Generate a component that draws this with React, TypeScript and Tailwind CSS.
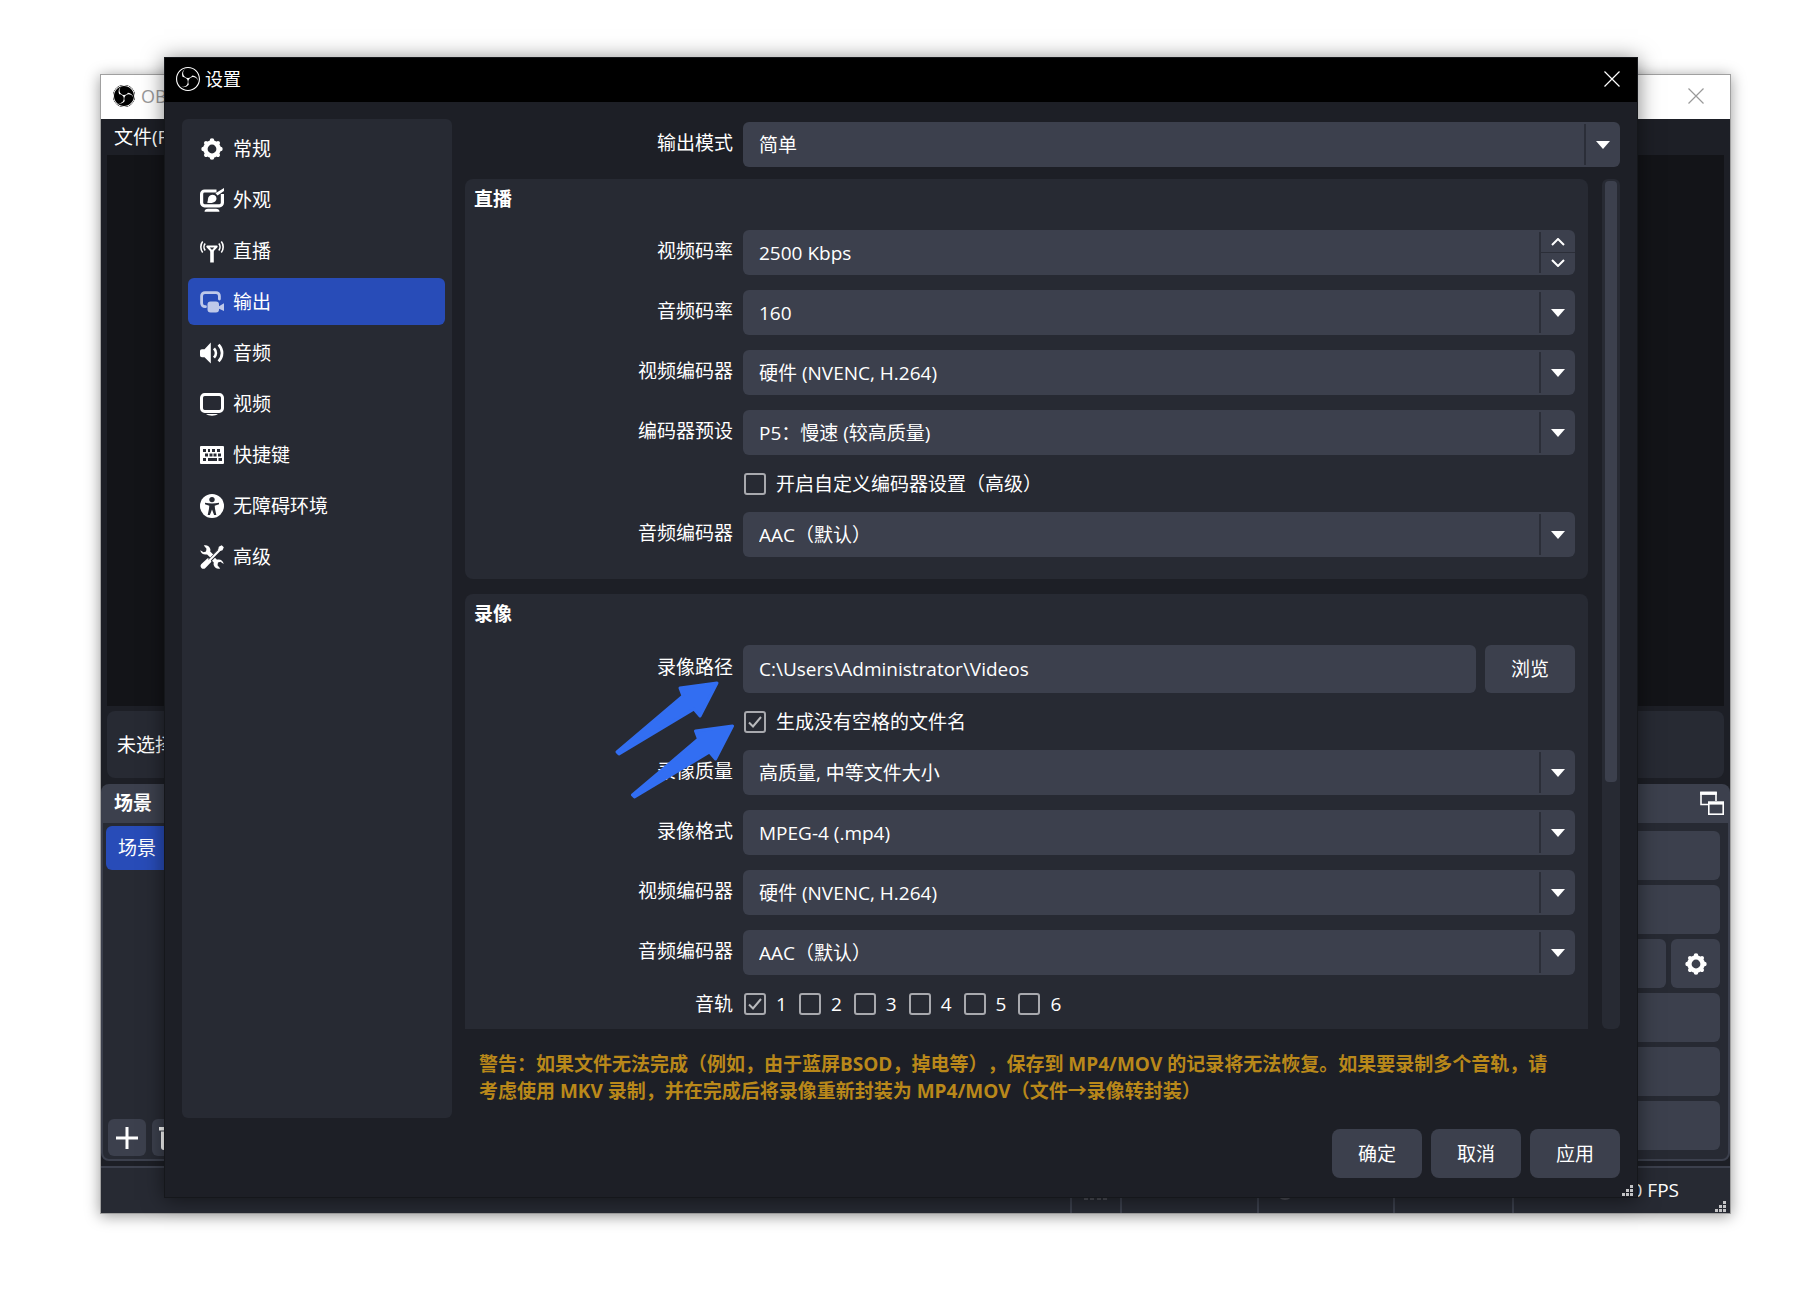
import { useId, type ReactNode } from "react";
import { SiObsstudio } from "react-icons/si";

function GearIcon({ className = "size-6" }: { className?: string }) {
  return (
    <svg viewBox="0 0 24 24" className={className} fill="none" stroke="currentColor">
      <circle cx="12" cy="12" r="6.6" strokeWidth="4.4" />
      <g strokeWidth="4.6" strokeLinecap="round">
        <path d="M12 3.6v1M12 19.4v1M3.6 12h1M19.4 12h1" />
        <path d="M6 6l.7.7M17.3 17.3l.7.7M6 18l.7-.7M17.3 6.7L18 6" strokeWidth="4" />
      </g>
    </svg>
  );
}

function AppearanceIcon() {
  return (
    <svg viewBox="0 0 24 24" className="size-6" fill="none" stroke="currentColor">
      <path
        d="M16.500 3H4.600a3 3 0 0 0-3 3v8.800a3 3 0 0 0 3 3h14.800a3 3 0 0 0 3-3V6"
        strokeWidth="3.200"
      />
      <path d="M4.500 23.800c0-2 1.500-3 3.500-3h8c2 0 3.500 1 3.500 3z" fill="currentColor" stroke="none" />
      <path d="M24 0l-8.500 5.200 2 2.200L24 3z" fill="currentColor" stroke="none" />
      <path
        d="M7 14.600c1.200-1 .6-3 1.300-5 1-2.700 4.200-3.700 6.400-2.300 2.200 1.500 2.400 4.300.7 6-1.900 1.800-5.200 2.300-8.400 1.300z"
        fill="currentColor"
        stroke="none"
      />
    </svg>
  );
}

function StreamIcon() {
  return (
    <svg viewBox="0 0 24 24" className="size-6" fill="none" stroke="currentColor">
      <path d="M7.300 7.500h9.400L12 12.500z" strokeWidth="2" strokeLinejoin="round" />
      <path d="M12 11v12.500" strokeWidth="3.600" />
      <path
        d="M5.200 4.600C3.600 6.500 3.600 9.500 5.200 11.400M2.700 2.600C.2 5.600.2 10.600 2.700 13.600M18.800 4.600c1.600 1.900 1.600 4.900 0 6.800M21.300 2.600c2.500 3 2.500 8 0 11"
        strokeWidth="1.600"
      />
    </svg>
  );
}

function OutputIcon() {
  return (
    <svg viewBox="0 0 24 24" className="size-6 opacity-70" fill="none" stroke="currentColor">
      <path
        d="M5.500 16.700H5a3.400 3.400 0 0 1-3.400-3.400V6A3.400 3.400 0 0 1 5 2.600h11A3.400 3.400 0 0 1 19.400 6v3"
        strokeWidth="2.800"
        strokeLinecap="round"
      />
      <rect x="7.500" y="11.500" width="11.500" height="11" rx="3" fill="currentColor" stroke="none" />
      <path d="M18.500 16.500l5.500-3.200v7.600l-5.500-2.400z" fill="currentColor" stroke="none" />
    </svg>
  );
}

function AudioIcon() {
  return (
    <svg viewBox="0 0 24 24" className="size-6" fill="none" stroke="currentColor">
      <path
        d="M2 8.200h2.500L10.800 1.500v21L4.500 16.200H2c-1.300 0-2-.8-2-2v-4c0-1.200.7-2 2-2z"
        fill="currentColor"
        stroke="none"
      />
      <path d="M14 7.300c2.500 2.800 2.500 6.600 0 9.400M18.600 3.600c4.600 5 4.600 11.800 0 16.800" strokeWidth="2.700" />
    </svg>
  );
}

function VideoIcon() {
  return (
    <svg viewBox="0 0 24 24" className="size-6" fill="none" stroke="currentColor">
      <rect x="1.500" y="2.500" width="21" height="17" rx="3.200" strokeWidth="3" />
      <path d="M6 22h12c-1.500 1.300-3.500 1.700-6 1.700S7.500 23.300 6 22z" fill="currentColor" stroke="none" />
    </svg>
  );
}

function HotkeyIcon() {
  return (
    <svg viewBox="0 0 24 24" className="size-6">
      <path
        fill="currentColor"
        fillRule="evenodd"
        d="M1 3h22a1 1 0 0 1 1 1v16a1 1 0 0 1-1 1H1a1 1 0 0 1-1-1V4a1 1 0 0 1 1-1zM3 6v3h3V6zm5 0v3h2V6zm4 0v3h3V6zm5 0v3h3V6zM5 10.500v3h3v-3zm4.500 0v3h3v-3zm4 0v3h3v-3zm4.500 0v3h3v-3zM3 15v3h3v-3zm5 0v3h9v-3zm10.500 0v3H22v-3z"
      />
    </svg>
  );
}

function AccessibilityIcon() {
  return (
    <svg viewBox="0 0 24 24" className="size-6">
      <circle cx="12" cy="12" r="12" fill="currentColor" />
      <circle cx="12" cy="5.600" r="2.700" fill="#272a33" />
      <path
        d="M5 8.800c4.600 1 9.400 1 14 0v1.500l-4.300 1.500.3 3 1.300 6.200h-2.200L12 15.500 9.900 21H7.700L9 14.800l.3-3L5 10.300z"
        fill="#272a33"
      />
    </svg>
  );
}

function ToolsIcon() {
  return (
    <svg viewBox="0 0 24 24" className="size-6" fill="currentColor">
      <path d="M3.800.5C6.500-.3 9.600 1 10.300 4c.2.800.1 1.600-.1 2.400l3 3-2.900 3-3.200-3C3.800 10.300.7 8.200.3 5.200L3.600 7.300 6 6.500l.5-2.700z" />
      <path d="M20.200 23.500c-2.700.8-5.800-.5-6.500-3.500-.2-.8-.1-1.600.1-2.400l-1.800-1.800 3-3 2 1.900c3.300-.9 6.300 1.200 6.700 4.200l-3.300-2.200-2.400.9-.5 2.600z" />
      <path d="M21.700.2L23.800 2.300l-1.300 3-2.200.7L10.800 15.500l.6 1.200-6 6.300c-1.300 1.300-3 1-4 0s-1.300-2.600 0-4l6.200-5.800 1.300.6L18.300 4.300l.5-2.600z" />
      <path d="M8.500 14.700L18 5" stroke="#272a33" strokeWidth=".7" fill="none" />
    </svg>
  );
}

function PopoutIcon() {
  return (
    <svg viewBox="0 0 24 24" className="size-6" fill="none" stroke="currentColor">
      <path d="M8 13.500H1V1.500h15V10" strokeWidth="1.600" />
      <path d="M.2 2.300h16.600" strokeWidth="3.200" />
      <rect x="8.800" y="11.500" width="14.400" height="11.700" strokeWidth="1.600" />
      <path d="M8 12h16" strokeWidth="3.200" />
    </svg>
  );
}

function CloseIcon() {
  return (
    <svg viewBox="0 0 16 16" className="size-4" fill="none" stroke="currentColor" strokeWidth="1.200">
      <path d="M.5.5l15 15M15.500.5l-15 15" />
    </svg>
  );
}

function SizeGrip() {
  return (
    <svg viewBox="0 0 12 12" className="absolute bottom-0 right-[3px] size-3" fill="#c4c4c6">
      <path d="M8 0h3v3H8zM4 4h3v3H4zM8 4h3v3H8zM0 8h3v3H0zM4 8h3v3H4zM8 8h3v3H8z" />
    </svg>
  );
}

function Row({ label, htmlFor, children }: { label?: string; htmlFor?: string; children: ReactNode }) {
  return (
    <div className="flex items-center gap-[10px]">
      <label htmlFor={htmlFor} className="w-[268px] shrink-0 pb-1 text-right">
        {label}
      </label>
      <div className="flex min-w-0 flex-1 gap-[9px]">{children}</div>
    </div>
  );
}

function SelectRow({ label, value }: { label: string; value: string }) {
  const id = useId();
  return (
    <Row label={label} htmlFor={id}>
      <div className="relative flex-1">
        <select
          id={id}
          className="block h-[45px] w-full appearance-none rounded-md bg-[#3c404d] pl-4 pr-12 text-white"
        >
          <option>{value}</option>
        </select>
        <div className="pointer-events-none absolute inset-y-[2px] right-0 flex w-9 items-center justify-center border-l-2 border-[#2b2e38]">
          <svg viewBox="0 0 14 8" className="h-2 w-[14px]" fill="white">
            <path d="M0 0h14L7 8z" />
          </svg>
        </div>
      </div>
    </Row>
  );
}

function CheckBox({ label, checked = false }: { label: string; checked?: boolean }) {
  return (
    <label className="flex items-center gap-[10px]">
      <span className="grid size-[22px] place-items-center">
        <input
          type="checkbox"
          defaultChecked={checked}
          className="peer col-start-1 row-start-1 size-[22px] appearance-none rounded-[3px] border-2 border-[#a8a9ae]"
        />
        <svg
          viewBox="0 0 14 12"
          className="pointer-events-none invisible col-start-1 row-start-1 h-3 w-[14px] peer-checked:visible"
          fill="none"
          stroke="#b9babd"
          strokeWidth="2"
        >
          <path d="M1 6.500l4 4L13 1" />
        </svg>
      </span>
      {label}
    </label>
  );
}

function Group({ title, children }: { title: string; children: ReactNode }) {
  return (
    <section className="rounded-lg bg-[#272a33] pb-[22px] pr-[13px]">
      <h2 className="pb-[17px] pl-[9px] pt-[6px] font-bold">{title}</h2>
      {children}
    </section>
  );
}

const navItems = [
  { label: "常规", icon: <GearIcon /> },
  { label: "外观", icon: <AppearanceIcon /> },
  { label: "直播", icon: <StreamIcon /> },
  { label: "输出", icon: <OutputIcon />, active: true },
  { label: "音频", icon: <AudioIcon /> },
  { label: "视频", icon: <VideoIcon /> },
  { label: "快捷键", icon: <HotkeyIcon /> },
  { label: "无障碍环境", icon: <AccessibilityIcon /> },
  { label: "高级", icon: <ToolsIcon /> },
];

function MainWindow() {
  return (
    <div className="absolute bottom-[91px] left-[100px] right-[89px] top-[74px] flex flex-col border border-[#a0a0a0] bg-[#1d1f26] shadow-[0_2px_14px_rgba(0,0,0,0.4)]">
      <div className="flex h-11 items-center bg-white pb-[2px] pl-3 text-lg text-[#999]">
        <SiObsstudio className="size-[22px] rounded-full bg-black text-white ring-1 ring-inset ring-black" />
        <span className="pl-[6px]">OBS</span>
        <button aria-label="关闭主窗口" className="ml-auto pr-[26px]">
          <CloseIcon />
        </button>
      </div>
      <div className="h-9 pl-[13px] pt-1">文件(F)</div>
      <div className="mx-[6px] flex-1 bg-[#131418]" />
      <div className="mx-[6px] mt-[5px] flex h-[67px] items-center rounded-lg bg-[#272a33] pl-[10px]">
        未选择源
      </div>
      <div className="mt-[6px] flex h-[38px] items-center justify-between rounded-t-lg bg-[#3c404d] pl-[13px] pr-[6px] font-bold">
        场景
        <PopoutIcon />
      </div>
      <div className="flex h-[339px] justify-between rounded-b-lg border-2 border-t border-[#3c404d] bg-[#272a33]">
        <div className="flex w-64 flex-col pl-[3px] pt-[3px]">
          <div className="flex h-11 items-center rounded-md bg-[#284cb8] pl-3">场景</div>
          <div className="mb-[3px] ml-[2px] mt-auto flex gap-[6px]">
            <button aria-label="添加" className="grid h-[37px] w-[38px] place-items-center rounded-md bg-[#3c404d]">
              <svg viewBox="0 0 22 22" className="size-[22px]" stroke="white" strokeWidth="3">
                <path d="M11 0v22M0 11h22" />
              </svg>
            </button>
            <button aria-label="删除" className="grid h-[37px] w-[38px] place-items-center rounded-md bg-[#3c404d]">
              <svg viewBox="0 0 24 24" className="size-6" fill="white">
                <path d="M0 1h24v3.500H0zM2 5.500h20V21a3 3 0 0 1-3 3H5a3 3 0 0 1-3-3z" />
              </svg>
            </button>
          </div>
        </div>
        <div className="flex w-64 flex-col gap-[5px] pr-2 pt-2">
          <div className="h-[49px] rounded-md bg-[#3c404d]" />
          <div className="h-[49px] rounded-md bg-[#3c404d]" />
          <div className="flex gap-[5px]">
            <div className="h-[49px] flex-1 rounded-md bg-[#3c404d]" />
            <button aria-label="设置" className="grid size-[49px] place-items-center rounded-md bg-[#3c404d]">
              <GearIcon />
            </button>
          </div>
          <div className="h-[49px] rounded-md bg-[#3c404d]" />
          <div className="h-[49px] rounded-md bg-[#3c404d]" />
          <div className="h-[49px] rounded-md bg-[#3c404d]" />
        </div>
      </div>
      <div className="relative mt-[5px] flex h-[47px] justify-end border-t-2 border-[#3c404d] bg-[#272a33]">
        <div className="w-[50px] border-l-2 border-[#3c404d] pl-3 pt-3">
          <svg viewBox="0 0 24 20" className="h-5 w-6" stroke="#4a4c54" strokeWidth="4">
            <path d="M2 14v6M8 10v10M15 5v15M21 0v20" />
          </svg>
        </div>
        <div className="w-[137px] border-l-2 border-[#3c404d]" />
        <div className="w-[136px] border-l-2 border-[#3c404d] pl-[18px] pt-4">
          <div className="size-4 rounded-full bg-[#4a4c54]" />
        </div>
        <div className="w-[119px] border-l-2 border-[#3c404d]" />
        <div className="w-[218px] border-l-2 border-[#3c404d] pr-[51px] pt-2 text-right">30.00 FPS</div>
        <SizeGrip />
      </div>
    </div>
  );
}

function Arrows() {
  return (
    <svg
      viewBox="0 0 130 124"
      className="pointer-events-none absolute left-[148px] top-[84px] h-[124px] w-[130px]"
      fill="#326ef2"
      stroke="#326ef2"
      strokeWidth="3"
      strokeLinejoin="round"
    >
      <path d="M104 5L67 10 70 18 4 74 6 76 81 31 87 38z" />
      <path d="M119.500 48L82.500 53 85.500 61 19.500 117 21.500 119 96.500 74 102.500 81z" />
    </svg>
  );
}

function SettingsDialog() {
  return (
    <div
      role="dialog"
      aria-label="设置"
      className="absolute bottom-[107px] left-[164px] right-[182px] top-[57px] flex flex-col border border-[#15171b] bg-[#1d1f26] shadow-[0_2px_20px_rgba(0,0,0,0.5)]"
    >
      <div className="flex h-11 shrink-0 items-center gap-[5px] bg-black pb-[2px] pl-[11px] pr-[17px] text-lg">
        <SiObsstudio className="size-6" />
        设置
        <button aria-label="关闭" className="ml-auto">
          <CloseIcon />
        </button>
      </div>

      <div className="flex min-h-0 flex-1 gap-[13px] px-[17px] pt-[17px]">
        <nav className="flex w-[270px] shrink-0 flex-col gap-1 rounded-md bg-[#272a33] py-[6px] pl-[6px] pr-[7px]">
          {navItems.map((item) => (
            <button
              key={item.label}
              className={`flex h-[47px] shrink-0 items-center gap-[9px] rounded-md pl-3 ${item.active ? "bg-[#284cb8]" : ""}`}
            >
              {item.icon}
              {item.label}
            </button>
          ))}
        </nav>

        <div className="flex min-w-0 flex-1 flex-col pt-[3px]">
          <SelectRow label="输出模式" value="简单" />
          <div className="mt-3 flex min-h-0 flex-1 gap-[14px]">
            <div className="flex min-w-0 flex-1 flex-col gap-[15px] overflow-y-auto [scrollbar-width:none]">
              <Group title="直播">
                <div className="flex flex-col gap-[15px]">
                  <Row label="视频码率" htmlFor="video-bitrate">
                    <div className="flex h-[45px] flex-1 rounded-md bg-[#3c404d]">
                      <input
                        id="video-bitrate"
                        defaultValue="2500 Kbps"
                        className="min-w-0 flex-1 bg-transparent pl-4 outline-none"
                      />
                      <div className="my-[2px] flex w-9 flex-col border-l-2 border-[#2b2e38]">
                        <button aria-label="增加" className="grid flex-1 place-items-center border-b border-[#2b2e38]">
                          <svg viewBox="0 0 14 8" className="h-2 w-[14px]" fill="none" stroke="white" strokeWidth="2">
                            <path d="M1 7l6-6 6 6" />
                          </svg>
                        </button>
                        <button aria-label="减少" className="grid flex-1 place-items-center">
                          <svg viewBox="0 0 14 8" className="h-2 w-[14px]" fill="none" stroke="white" strokeWidth="2">
                            <path d="M1 1l6 6 6-6" />
                          </svg>
                        </button>
                      </div>
                    </div>
                  </Row>
                  <SelectRow label="音频码率" value="160" />
                  <SelectRow label="视频编码器" value="硬件 (NVENC, H.264)" />
                  <SelectRow label="编码器预设" value="P5：慢速 (较高质量)" />
                </div>
                <div className="flex h-[57px] items-center pl-[279px]">
                  <CheckBox label="开启自定义编码器设置（高级）" />
                </div>
                <SelectRow label="音频编码器" value="AAC（默认）" />
              </Group>

              <div className="relative">
                <Group title="录像">
                  <Row label="录像路径" htmlFor="recording-path">
                    <input
                      id="recording-path"
                      defaultValue="C:\Users\Administrator\Videos"
                      className="h-12 min-w-0 flex-1 rounded-md bg-[#3c404d] pl-4 outline-none"
                    />
                    <button className="h-12 w-[90px] rounded-md bg-[#3c404d]">浏览</button>
                  </Row>
                  <div className="flex h-[57px] items-center pl-[279px]">
                    <CheckBox label="生成没有空格的文件名" checked />
                  </div>
                  <div className="flex flex-col gap-[15px]">
                    <SelectRow label="录像质量" value="高质量, 中等文件大小" />
                    <SelectRow label="录像格式" value="MPEG-4 (.mp4)" />
                    <SelectRow label="视频编码器" value="硬件 (NVENC, H.264)" />
                    <SelectRow label="音频编码器" value="AAC（默认）" />
                  </div>
                  <div className="flex h-[57px] items-center">
                    <span className="w-[279px] pr-[11px] text-right">音轨</span>
                    <div className="flex gap-3">
                      {["1", "2", "3", "4", "5", "6"].map((track) => (
                        <CheckBox key={track} label={track} checked={track === "1"} />
                      ))}
                    </div>
                  </div>
                </Group>
                <Arrows />
              </div>
            </div>
            <div className="w-[18px] rounded-md bg-[#272a33] px-[3px] py-[2px]">
              <div className="h-[71%] rounded-[4px] bg-[#3c404d]" />
            </div>
          </div>
          <p className="pb-[13px] pl-[14px] pr-16 pt-[22px] font-bold leading-[27px] text-[#b9881a]">
            警告：如果文件无法完成（例如，由于蓝屏BSOD，掉电等），保存到 MP4/MOV
            的记录将无法恢复。如果要录制多个音轨，请考虑使用 MKV 录制，并在完成后将录像重新封装为
            MP4/MOV（文件→录像转封装）
          </p>
        </div>
      </div>

      <div className="flex justify-end gap-[9px] pb-[19px] pr-[17px] pt-[11px]">
        <button className="h-[49px] w-[90px] rounded-lg bg-[#3c404d]">确定</button>
        <button className="h-[49px] w-[90px] rounded-lg bg-[#3c404d]">取消</button>
        <button className="h-[49px] w-[90px] rounded-lg bg-[#3c404d]">应用</button>
      </div>
      <SizeGrip />
    </div>
  );
}

export default function App() {
  return (
    <div
      lang="zh-CN"
      className="relative h-screen min-h-[1200px] overflow-hidden bg-white font-['Open_Sans','Noto_Sans_CJK_SC',sans-serif] text-[19px] leading-7 text-white [text-spacing-trim:space-all]"
    >
      <MainWindow />
      <SettingsDialog />
    </div>
  );
}
